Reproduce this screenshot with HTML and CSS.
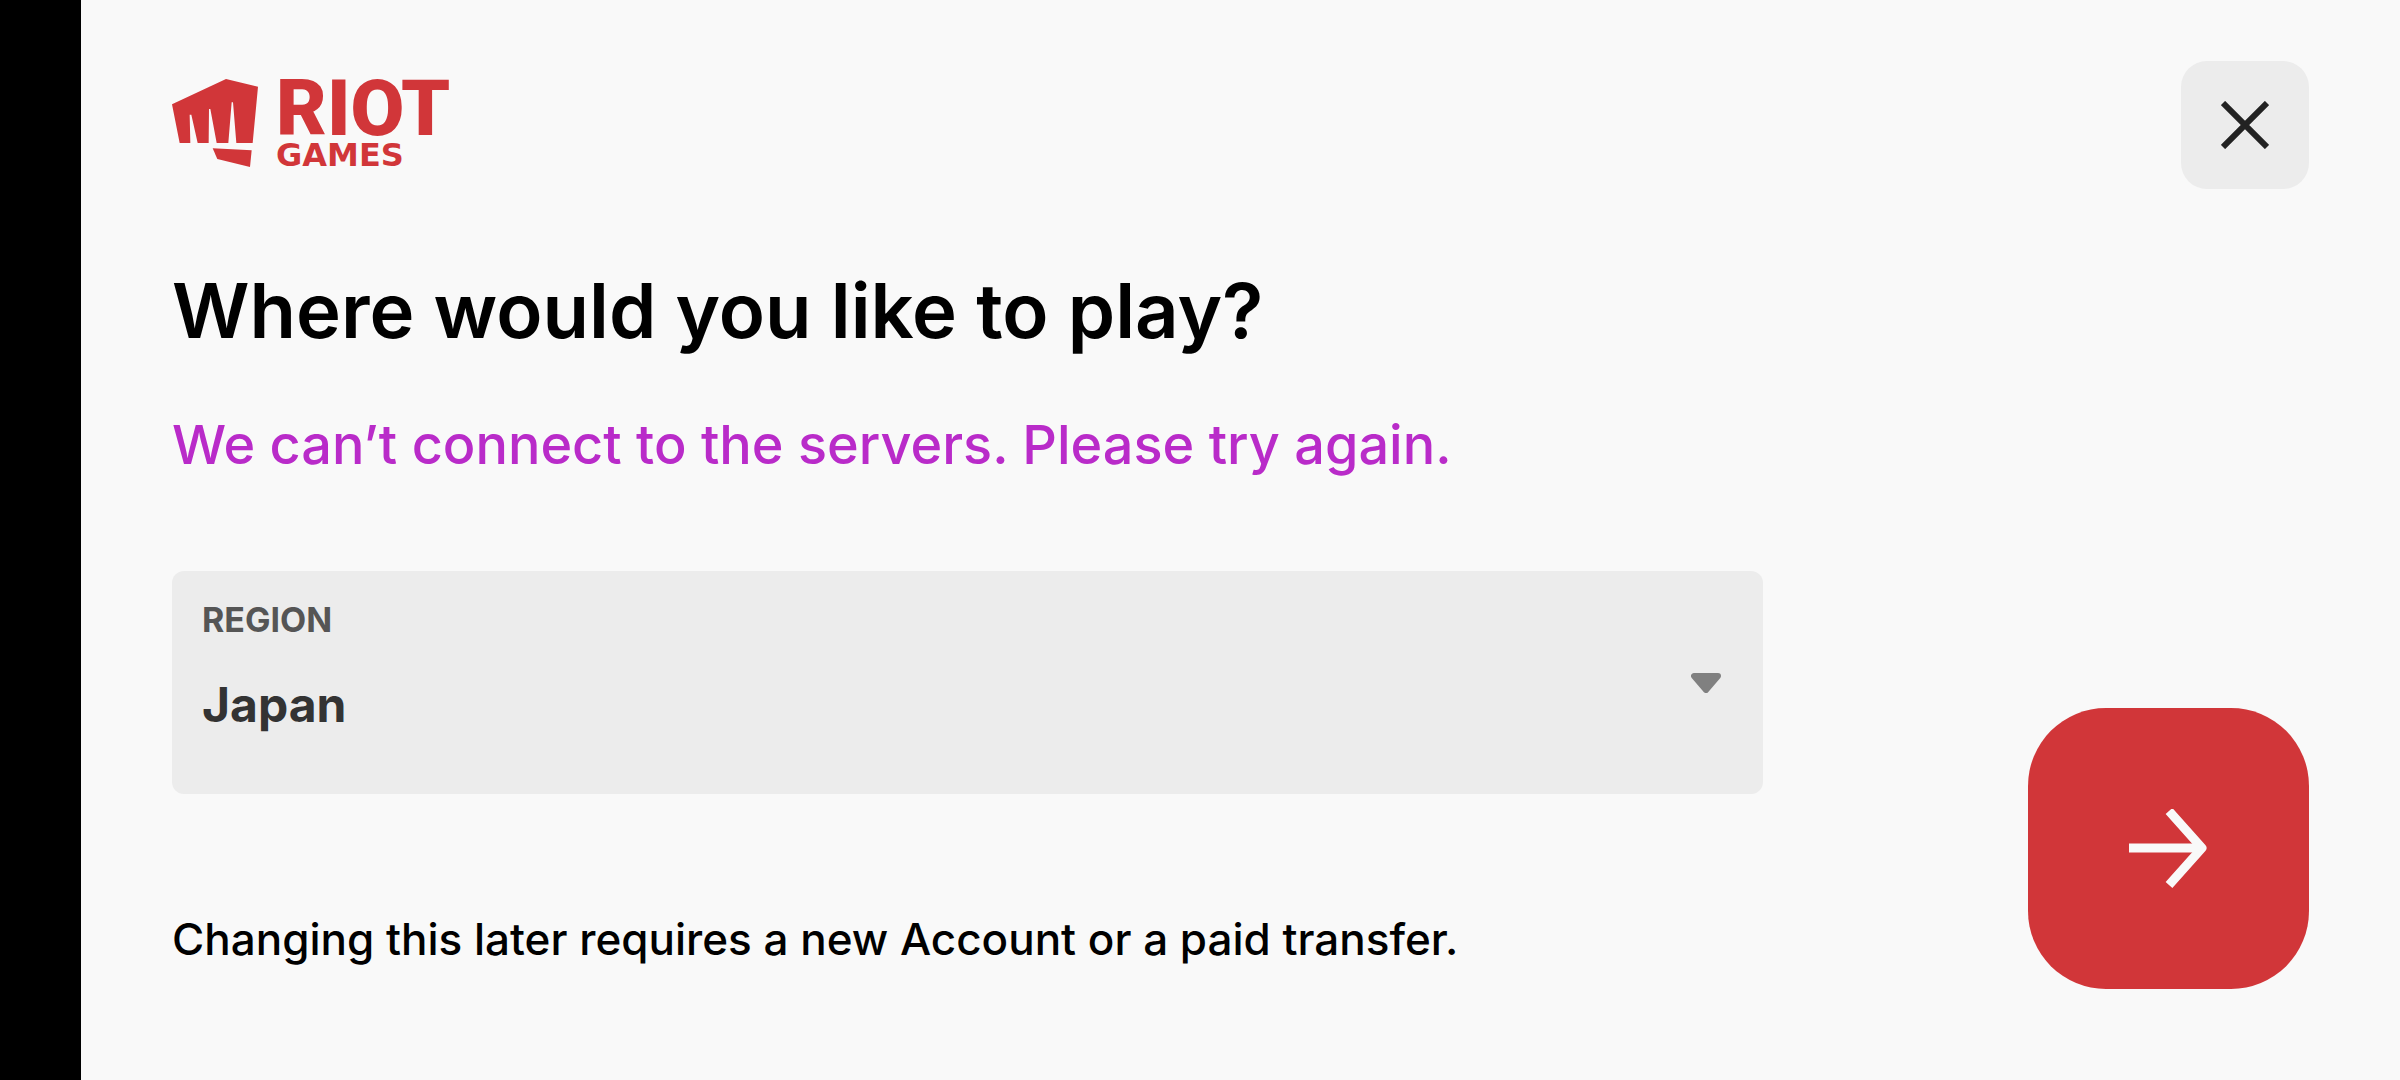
FILE: index.html
```html
<!DOCTYPE html>
<html lang="en">
<head>
  <meta charset="UTF-8">
  <meta name="viewport" content="width=device-width, initial-scale=1.0">
  <title>Riot Games - Region</title>
  <link rel="stylesheet" href="styles.css">
</head>
<body>
  <div class="page">
    <header class="header">
      <div class="logo">
        <svg class="logo-fist" viewBox="38 27 258 264" aria-hidden="true">
          <path d="M38 103 200 27 296 50 280 219H231L221 97H217L207 219H172L153 117H149L148 219H115L96 134H91L93 219H61Z"/>
          <path d="M160 235 277 241 272 291 174 267Z"/>
        </svg>
        <div class="logo-text">
          <span class="logo-riot">RIOT</span>
          <span class="logo-games">GAMES</span>
        </div>
      </div>
      <button class="close-btn" type="button" aria-label="Close">
        <svg viewBox="0 0 48 48" aria-hidden="true"><path d="M2 2 46 46M46 2 2 46"/></svg>
      </button>
    </header>

    <form class="main">
      <div class="content">
        <h1 class="title">Where would you like to play?</h1>
        <p class="error">We can’t connect to the servers. Please try again.</p>

        <div class="field">
          <label class="field-label" for="region">REGION</label>
          <select class="field-select" id="region" name="region">
            <option selected>Japan</option>
          </select>
          <svg class="field-arrow" viewBox="0 0 30 20" aria-hidden="true">
            <path d="M3 3H27L15 17Z"/>
          </svg>
        </div>

        <p class="note">Changing this later requires a new Account or a paid transfer.</p>
      </div>

      <button class="next-btn" type="submit" aria-label="Next">
        <svg viewBox="0 0 80 80" aria-hidden="true">
          <path d="M0 39H72"/>
          <path d="M40 2 73 39 40 76"/>
        </svg>
      </button>
    </form>
  </div>
</body>
</html>
```

FILE: styles.css
```css
* { box-sizing: border-box; }
body { margin: 0; background: #f9f9f9; color: #000; font-family: Inter, "Open Sans", sans-serif; }
h1, p { margin: 0; }
svg { display: block; }
button { display: flex; align-items: center; justify-content: center; padding: 0; border: none; cursor: pointer; }

.page { display: flex; flex-direction: column; min-height: 100vh; padding: 61px 91px 91px; border-left: 81px solid #000; }

/* header */
.header { display: flex; align-items: center; justify-content: space-between; }
.logo { display: flex; align-items: center; gap: 18px; padding-bottom: 4px; color: #d13639; }
.logo-fist { width: 86px; height: 88px; fill: currentColor; }
.logo-text { display: flex; flex-direction: column; }
.logo-riot { font: 900 78px/64px Roboto, sans-serif; }
.logo-games { font: bold 32px/28px "DejaVu Sans", sans-serif; }
.close-btn { width: 128px; height: 128px; border-radius: 26px; background: #ececec; }
.close-btn svg { width: 48px; height: 48px; fill: none; stroke: #222; stroke-width: 6; }

/* form */
.main { display: flex; flex: 1; gap: 265px; padding-top: 75px; }
.content { flex: 1; }
.title { font-size: 76px; line-height: 92px; font-weight: 600; }
.error { margin-top: 58px; color: #b92bc9; font-size: 54px; line-height: 62px; font-weight: 500; }
.note { margin-top: 120px; font-size: 44px; line-height: 50px; font-weight: 500; }

.field { display: grid; margin-top: 95px; }
.field > * { grid-area: 1 / 1; }
.field-label { z-index: 1; justify-self: start; padding: 29px 30px; color: #555; font-size: 34px; line-height: 40px; font-weight: bold; pointer-events: none; }
.field-select { appearance: none; width: 100%; height: 223px; padding: 44px 80px 0 30px; border: none; border-radius: 12px; background: #ececec; color: #333; font: bold 48px Inter, sans-serif; }
.field-arrow { width: 30px; height: 20px; margin-right: 42px; align-self: center; justify-self: end; fill: #808080; stroke: #808080; stroke-width: 6; stroke-linejoin: round; pointer-events: none; }

.next-btn { align-self: flex-end; width: 281px; height: 281px; border-radius: 78px; background: #d13639; }
.next-btn svg { width: 80px; height: 80px; fill: none; stroke: #f9f9f9; stroke-width: 9; stroke-linejoin: round; }
```
